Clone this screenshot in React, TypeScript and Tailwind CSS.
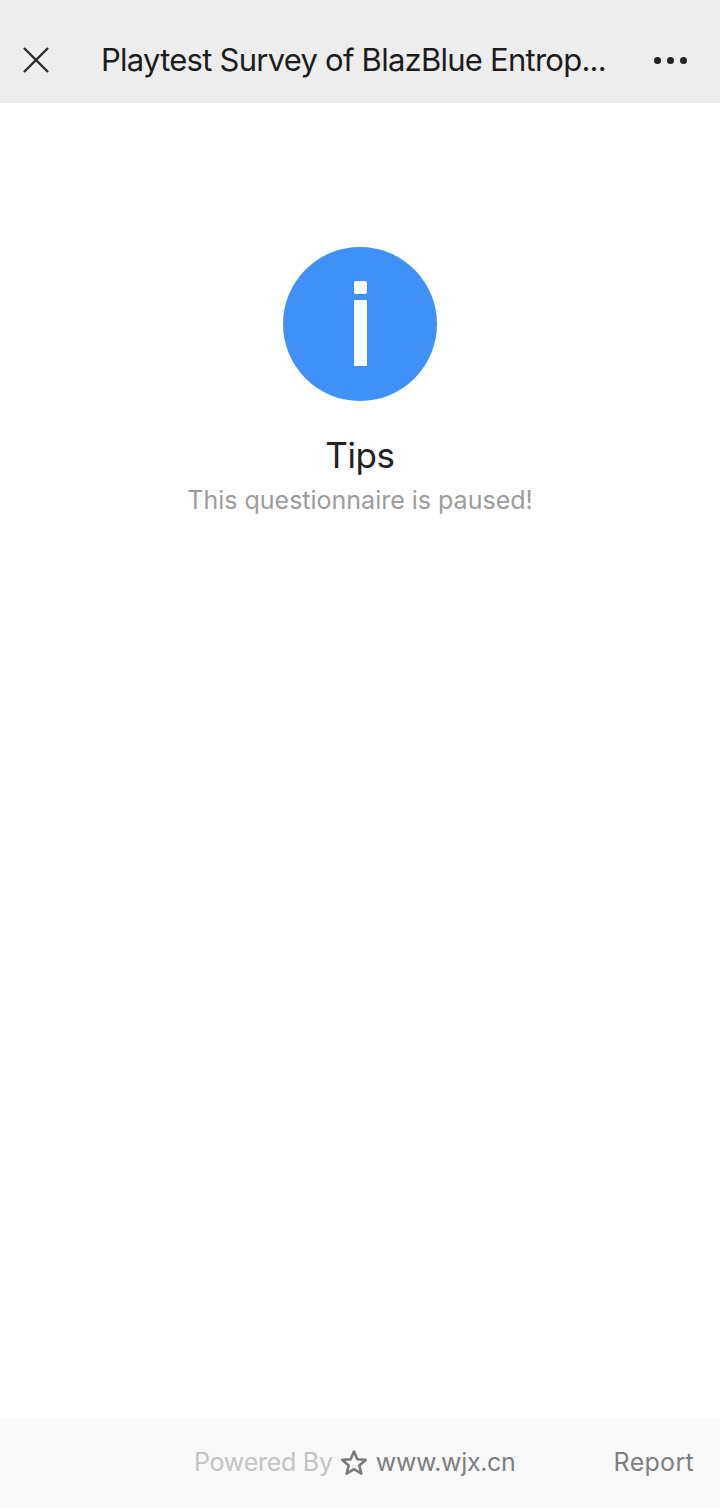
import React from "react";

export default function App() {
  return (
    <div className="flex h-[1508px] w-[720px] flex-col bg-white font-['Inter',sans-serif]">
      {/* Title bar */}
      <header className="flex h-[103px] shrink-0 items-center bg-[#ededed] pt-[17px]">
        <div className="flex w-[101px] shrink-0 justify-start pl-[21px]">
          <svg width="30" height="30" viewBox="0 0 30 30" fill="none" stroke="#2a2a2a" strokeWidth="2.4">
            <path d="M3 3 L27 27 M27 3 L3 27" />
          </svg>
        </div>
        <h1 className="w-[520px] shrink-0 whitespace-nowrap text-[31px] leading-10 tracking-[-0.75px] text-[#1c1c1c]">
          Playtest Survey of BlazBlue Entrop...
        </h1>
        <div className="ml-[33px] flex gap-[6px]">
          <span className="size-[7px] rounded-full bg-[#222222]" />
          <span className="size-[7px] rounded-full bg-[#222222]" />
          <span className="size-[7px] rounded-full bg-[#222222]" />
        </div>
      </header>

      {/* Message */}
      <main className="flex flex-1 flex-col items-center pt-[144px]">
        <div className="flex size-[154px] flex-col items-center rounded-full bg-[#3f90f7] pt-[34px]">
          <span className="h-[13px] w-[13px] rounded-[2px] bg-white" />
          <span className="mt-[6px] h-[66px] w-[13px] rounded-[1px] bg-white" />
        </div>
        <h2 className="mt-[32px] text-[35px] leading-[44px] tracking-[-0.4px] text-[#222222]">Tips</h2>
        <p className="mt-[6px] text-[25px] leading-[34px] text-[#9c9c9c]">
          This questionnaire is paused!
        </p>
      </main>

      {/* Footer */}
      <footer className="flex h-[89px] shrink-0 items-center bg-[#f9f9f9] pb-[1px] pl-[194px] pr-[26px] text-[25px]">
        <span className="tracking-[-0.25px] text-[#c4c4c4]">Powered By</span>
        <svg className="ml-[7px]" width="28" height="28" viewBox="0 0 28 28" fill="none" stroke="#7b7b7b" strokeWidth="2.6" strokeLinejoin="round">
          <path d="M14 2.5 L17.3 10.2 L25.7 10.9 L19.3 16.4 L21.3 24.6 L14 20.2 L6.7 24.6 L8.7 16.4 L2.3 10.9 L10.7 10.2 Z" />
        </svg>
        <span className="ml-[8px] tracking-[-0.35px] text-[#7f7f7f]">www.wjx.cn</span>
        <span className="ml-auto tracking-[0.3px] text-[#7f7f7f]">Report</span>
      </footer>
    </div>
  );
}
